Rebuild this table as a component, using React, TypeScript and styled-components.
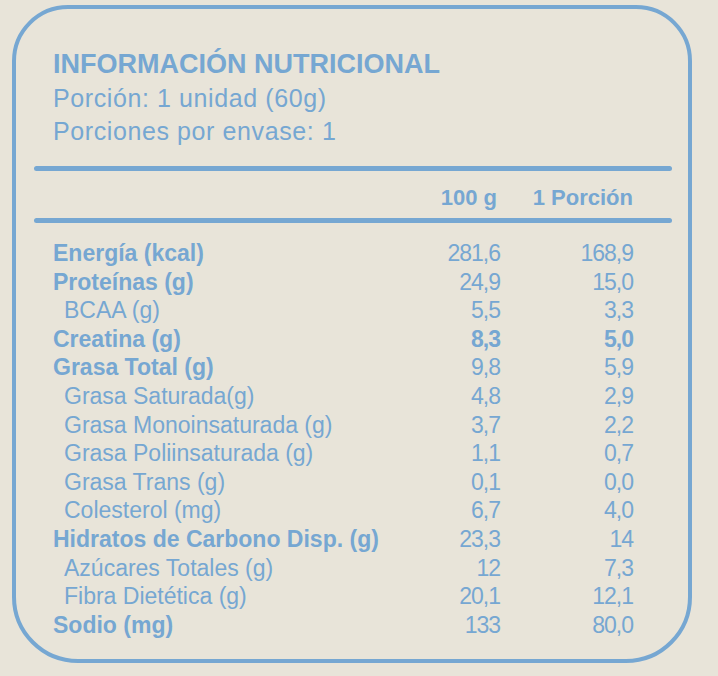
import styled, { createGlobalStyle } from "styled-components";

const blue = "#76a7d2";

const GlobalStyle = createGlobalStyle`
  body {
    margin: 0;
    background: #e8e4d9;
    font-family: "Liberation Sans", Arial, sans-serif;
    color: ${blue};
  }
`;

const Page = styled.div`
  width: 718px;
  height: 676px;
  padding: 5px 0 0 12px;
  box-sizing: border-box;
`;

const Card = styled.div`
  width: 680px;
  height: 658px;
  box-sizing: border-box;
  border: 4px solid ${blue};
  border-radius: 56px 56px 66px 66px;
  padding: 38px 16px 0 18px;
`;

const Head = styled.div`
  padding-left: 19px;
`;

const Title = styled.h1`
  margin: 0;
  font-size: 27px;
  line-height: 35px;
  font-weight: 700;
`;

const Sub = styled.div`
  font-size: 25px;
  line-height: 33px;
  letter-spacing: 0.6px;
`;

const Rule = styled.div<{ $gap: number }>`
  height: 5px;
  border-radius: 3px;
  background: ${blue};
  margin-top: ${(p) => p.$gap}px;
`;

const Grid = styled.div`
  display: grid;
  grid-template-columns: 1fr 110px 133px;
  padding: 0 39px 0 19px;
`;

const HeaderRow = styled(Grid)`
  padding-top: 6px;
  font-size: 22px;
  line-height: 41px;
  font-weight: 700;
`;

const HeadCell = styled.span<{ $inset?: number }>`
  text-align: right;
  padding-right: ${(p) => p.$inset ?? 0}px;
`;

const Table = styled.div`
  margin-top: 16px;
`;

const Row = styled(Grid)`
  font-size: 23px;
  line-height: 28.6px;
`;

const Label = styled.span<{ $bold?: boolean; $sub?: boolean }>`
  font-weight: ${(p) => (p.$bold ? 700 : 400)};
  padding-left: ${(p) => (p.$sub ? 11 : 0)}px;
  white-space: nowrap;
`;

const Value = styled.span<{ $bold?: boolean }>`
  text-align: right;
  font-weight: ${(p) => (p.$bold ? 700 : 400)};
  letter-spacing: -1px;
`;

type Item = {
  name: string;
  per100: string;
  portion: string;
  bold?: boolean;
  sub?: boolean;
  boldValues?: boolean;
};

const items: Item[] = [
  { name: "Energía (kcal)", per100: "281,6", portion: "168,9", bold: true },
  { name: "Proteínas (g)", per100: "24,9", portion: "15,0", bold: true },
  { name: "BCAA (g)", per100: "5,5", portion: "3,3", sub: true },
  { name: "Creatina (g)", per100: "8,3", portion: "5,0", bold: true, boldValues: true },
  { name: "Grasa Total (g)", per100: "9,8", portion: "5,9", bold: true },
  { name: "Grasa Saturada(g)", per100: "4,8", portion: "2,9", sub: true },
  { name: "Grasa Monoinsaturada (g)", per100: "3,7", portion: "2,2", sub: true },
  { name: "Grasa Poliinsaturada (g)", per100: "1,1", portion: "0,7", sub: true },
  { name: "Grasa Trans (g)", per100: "0,1", portion: "0,0", sub: true },
  { name: "Colesterol (mg)", per100: "6,7", portion: "4,0", sub: true },
  { name: "Hidratos de Carbono Disp. (g)", per100: "23,3", portion: "14", bold: true },
  { name: "Azúcares Totales (g)", per100: "12", portion: "7,3", sub: true },
  { name: "Fibra Dietética (g)", per100: "20,1", portion: "12,1", sub: true },
  { name: "Sodio (mg)", per100: "133", portion: "80,0", bold: true },
];

export default function App() {
  return (
    <>
      <GlobalStyle />
      <Page>
        <Card>
          <Head>
            <Title>INFORMACIÓN NUTRICIONAL</Title>
            <Sub>Porción: 1 unidad (60g)</Sub>
            <Sub>Porciones por envase: 1</Sub>
          </Head>
          <Rule $gap={18} />
          <HeaderRow>
            <span />
            <HeadCell $inset={3}>100 g</HeadCell>
            <HeadCell>1 Porción</HeadCell>
          </HeaderRow>
          <Rule $gap={0} />
          <Table>
            {items.map((it) => (
              <Row key={it.name}>
                <Label $bold={it.bold} $sub={it.sub}>
                  {it.name}
                </Label>
                <Value $bold={it.boldValues}>{it.per100}</Value>
                <Value $bold={it.boldValues}>{it.portion}</Value>
              </Row>
            ))}
          </Table>
        </Card>
      </Page>
    </>
  );
}
